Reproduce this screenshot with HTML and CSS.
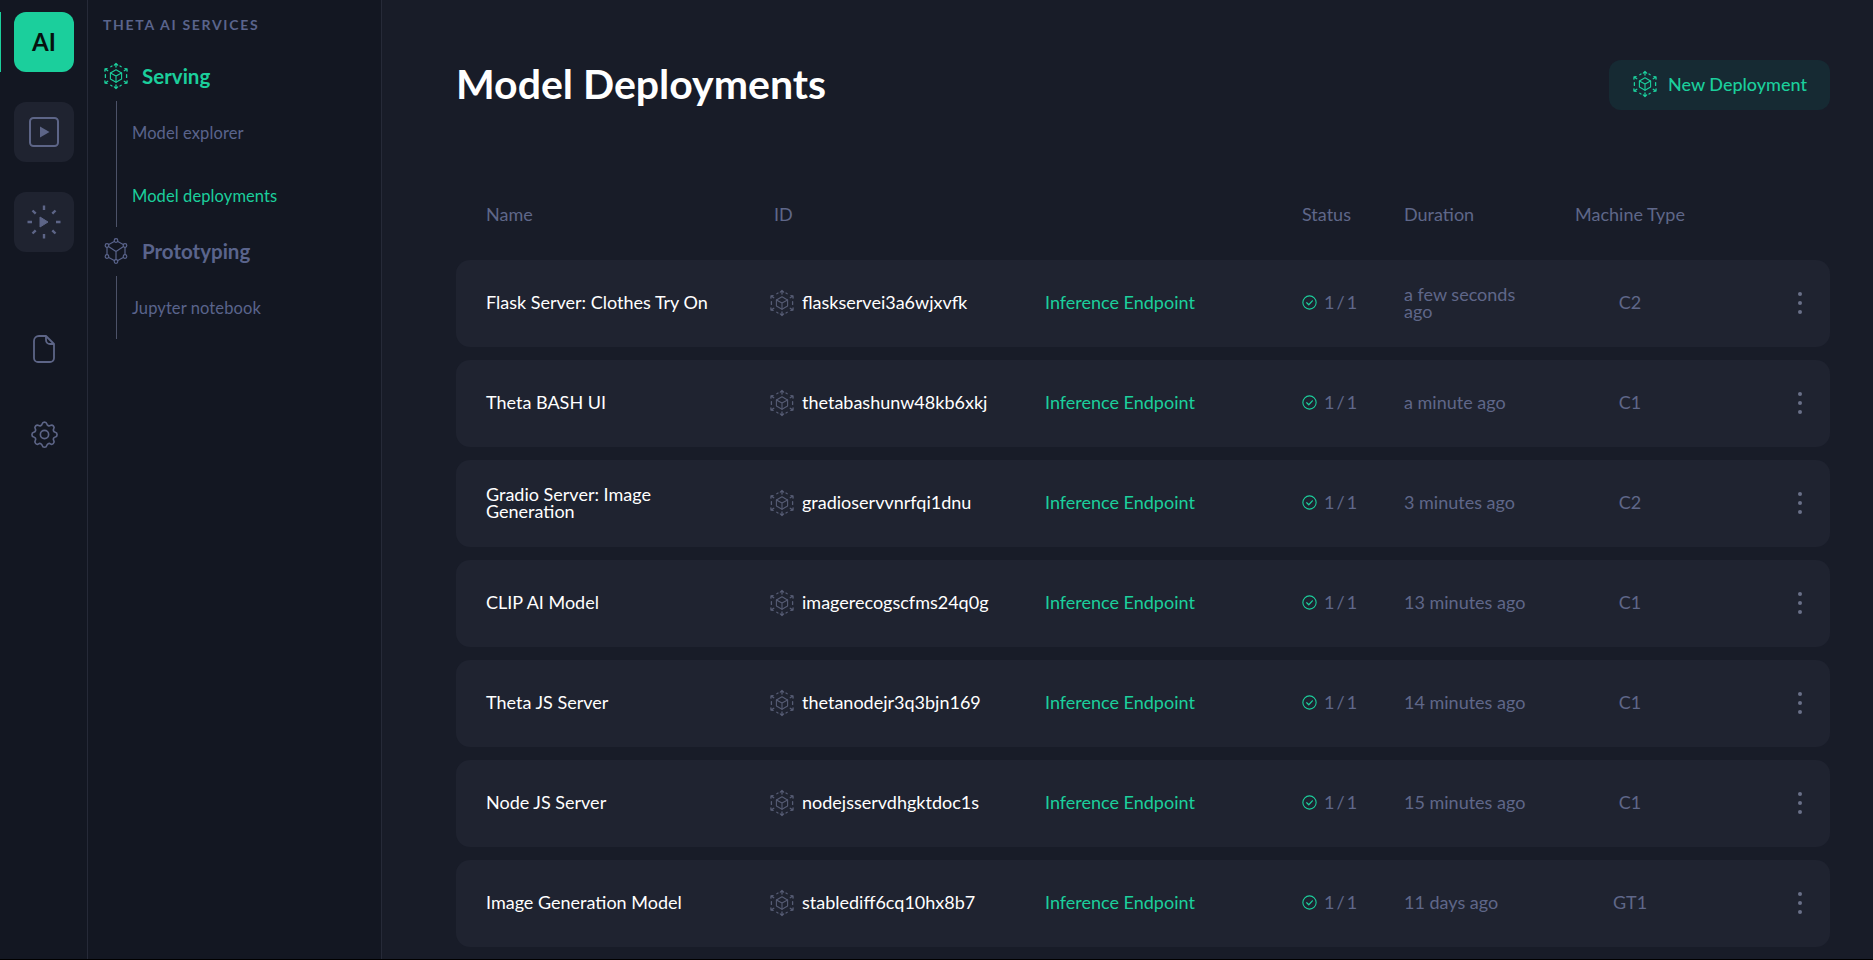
FILE: index.html
```html
<!DOCTYPE html>
<html lang="en">
<head>
<meta charset="utf-8">
<title>Model Deployments</title>
<link rel="stylesheet" href="styles.css">
</head>
<body>
<svg class="defs" width="0" height="0" aria-hidden="true">
  <symbol id="deploy" viewBox="0 0 26 28">
    <g fill="none" stroke="currentColor" stroke-width="1.100" stroke-linecap="round" stroke-linejoin="round">
      <path d="M13 7.800l5.600 3.100v6.200L13 20.200l-5.600-3.100v-6.200z"/>
      <path d="M7.400 10.900l5.600 3.100 5.600-3.100M13 14v6.200"/>
    </g>
    <g fill="none" stroke="currentColor" stroke-width="1.300" stroke-linecap="round" stroke-linejoin="round">
      <path d="M13 1.500v3.500M11.300 3.100L13 1.400l1.700 1.700"/>
      <path d="M13 26.500V23M11.300 24.900l1.700 1.700 1.700-1.700"/>
      <path d="M2 7l2.800 1.700M1.900 9.100L2 7l2.100-.3"/>
      <path d="M24 7l-2.800 1.700M24.100 9.100L24 7l-2.100-.3"/>
      <path d="M2 21l2.800-1.700M1.900 18.900L2 21l2.100.3"/>
      <path d="M24 21l-2.800-1.700M24.100 18.900L24 21l-2.100.3"/>
      <path d="M2.400 12.600v2.800M23.600 12.600v2.800M7.800 4.700l1.200-.7M18.200 4.700l-1.200-.7M7.800 23.300l1.200.7M18.200 23.300l-1.200.7"/>
    </g>
  </symbol>
  <symbol id="check" viewBox="0 0 14 14">
    <circle cx="7" cy="7" r="6.200" fill="none" stroke="currentColor" stroke-width="1"/>
    <path d="M4.400 7.200l1.900 1.900 3.400-3.700" fill="none" stroke="currentColor" stroke-width="1.100" stroke-linecap="round" stroke-linejoin="round"/>
  </symbol>
</svg>
<div class="app">
  <nav class="rail">
    <span class="rail-marker"></span>
    <a class="tile tile-active">AI</a>
    <a class="tile">
      <svg class="tile-icon" viewBox="0 0 32 32" fill="none"><rect x="2" y="2" width="28" height="28" rx="3.500" stroke="currentColor" stroke-width="2"/><path d="M12 10.500l9.500 5.500-9.500 5.500z" fill="currentColor"/></svg>
    </a>
    <a class="tile">
      <svg class="tile-icon tile-icon-wide" viewBox="0 0 36 36" fill="none"><g stroke="currentColor" stroke-width="2.400" stroke-linecap="butt"><path d="M18 1.500v4.500M18 30v4.500M1.500 18h4.500M30 18h4.500M6.500 6.500l3.200 3.200M26.300 26.300l3.200 3.200M29.500 6.500l-3.200 3.200M9.700 26.300l-3.200 3.200"/></g><path d="M14 13l8 5-8 5z" fill="currentColor" stroke="currentColor" stroke-width="1" stroke-linejoin="round"/></svg>
    </a>
    <a class="rail-link rail-link-file">
      <svg viewBox="0 0 22 28" width="22" height="28" fill="none" stroke="currentColor" stroke-width="1.800" stroke-linejoin="round"><path d="M6 1h7l8 8v14a4 4 0 0 1-4 4H5a4 4 0 0 1-4-4V6a5 5 0 0 1 5-5z"/><path d="M13 1v4a4 4 0 0 0 4 4h4"/></svg>
    </a>
    <a class="rail-link rail-link-gear">
      <svg viewBox="0 0 24 24" width="33" height="33" fill="none" stroke="currentColor" stroke-width="1.200" stroke-linejoin="round"><circle cx="12" cy="12" r="3"/><path d="M10.300 4.300c.4-1.800 3-1.800 3.400 0a1.700 1.700 0 0 0 2.600 1.100c1.500-.9 3.400.9 2.400 2.400a1.700 1.700 0 0 0 1.100 2.600c1.800.4 1.800 3 0 3.400a1.700 1.700 0 0 0-1.100 2.600c1 1.500-.9 3.400-2.400 2.400a1.700 1.700 0 0 0-2.600 1.100c-.4 1.800-3 1.800-3.400 0a1.700 1.700 0 0 0-2.600-1.100c-1.500 1-3.400-.9-2.400-2.400a1.700 1.700 0 0 0-1.100-2.600c-1.800-.4-1.800-3 0-3.400a1.700 1.700 0 0 0 1.100-2.600c-1-1.500.9-3.300 2.400-2.400a1.700 1.700 0 0 0 2.600-1.100z"/></svg>
    </a>
  </nav>

  <aside class="panel">
    <h2 class="panel-title">THETA AI SERVICES</h2>
    <div class="group group-active">
      <svg class="group-icon"><use href="#deploy"/></svg>
      <span>Serving</span>
    </div>
    <ul class="subnav">
      <li>Model explorer</li>
      <li class="current">Model deployments</li>
    </ul>
    <div class="group">
      <svg class="group-icon" viewBox="0 0 26 26" fill="none" stroke="currentColor" stroke-width="1.200" stroke-linejoin="round"><path d="M13 2.500l9 5v11l-9 5-9-5v-11z"/><path d="M4 7.500l9 6 9-6M13 13.500v10"/><g fill="#131722"><circle cx="13" cy="2.500" r="1.800"/><circle cx="22" cy="7.500" r="1.800"/><circle cx="22" cy="18.500" r="1.800"/><circle cx="13" cy="23.500" r="1.800"/><circle cx="4" cy="18.500" r="1.800"/><circle cx="4" cy="7.500" r="1.800"/></g></svg>
      <span>Prototyping</span>
    </div>
    <ul class="subnav">
      <li>Jupyter notebook</li>
    </ul>
  </aside>

  <main class="main">
    <header class="topbar">
      <h1>Model Deployments</h1>
      <button class="new-btn" type="button">
        <svg class="btn-icon"><use href="#deploy"/></svg>
        New Deployment
      </button>
    </header>

    <div class="row-grid table-head">
      <span>Name</span>
      <span class="head-id">ID</span>
      <span></span>
      <span>Status</span>
      <span>Duration</span>
      <span class="machine">Machine Type</span>
      <span></span>
    </div>

    <div class="rows">
      <article class="row-grid card">
        <div class="name">Flask Server: Clothes Try On</div>
        <div class="id"><svg class="id-icon"><use href="#deploy"/></svg>flaskservei3a6wjxvfk</div>
        <div class="type">Inference Endpoint</div>
        <div class="status"><svg class="check"><use href="#check"/></svg>1 / 1</div>
        <div class="duration">a few seconds ago</div>
        <div class="machine">C2</div>
        <div class="more"><i></i><i></i><i></i></div>
      </article>
      <article class="row-grid card">
        <div class="name">Theta BASH UI</div>
        <div class="id"><svg class="id-icon"><use href="#deploy"/></svg>thetabashunw48kb6xkj</div>
        <div class="type">Inference Endpoint</div>
        <div class="status"><svg class="check"><use href="#check"/></svg>1 / 1</div>
        <div class="duration">a minute ago</div>
        <div class="machine">C1</div>
        <div class="more"><i></i><i></i><i></i></div>
      </article>
      <article class="row-grid card">
        <div class="name">Gradio Server: Image Generation</div>
        <div class="id"><svg class="id-icon"><use href="#deploy"/></svg>gradioservvnrfqi1dnu</div>
        <div class="type">Inference Endpoint</div>
        <div class="status"><svg class="check"><use href="#check"/></svg>1 / 1</div>
        <div class="duration">3 minutes ago</div>
        <div class="machine">C2</div>
        <div class="more"><i></i><i></i><i></i></div>
      </article>
      <article class="row-grid card">
        <div class="name">CLIP AI Model</div>
        <div class="id"><svg class="id-icon"><use href="#deploy"/></svg>imagerecogscfms24q0g</div>
        <div class="type">Inference Endpoint</div>
        <div class="status"><svg class="check"><use href="#check"/></svg>1 / 1</div>
        <div class="duration">13 minutes ago</div>
        <div class="machine">C1</div>
        <div class="more"><i></i><i></i><i></i></div>
      </article>
      <article class="row-grid card">
        <div class="name">Theta JS Server</div>
        <div class="id"><svg class="id-icon"><use href="#deploy"/></svg>thetanodejr3q3bjn169</div>
        <div class="type">Inference Endpoint</div>
        <div class="status"><svg class="check"><use href="#check"/></svg>1 / 1</div>
        <div class="duration">14 minutes ago</div>
        <div class="machine">C1</div>
        <div class="more"><i></i><i></i><i></i></div>
      </article>
      <article class="row-grid card">
        <div class="name">Node JS Server</div>
        <div class="id"><svg class="id-icon"><use href="#deploy"/></svg>nodejsservdhgktdoc1s</div>
        <div class="type">Inference Endpoint</div>
        <div class="status"><svg class="check"><use href="#check"/></svg>1 / 1</div>
        <div class="duration">15 minutes ago</div>
        <div class="machine">C1</div>
        <div class="more"><i></i><i></i><i></i></div>
      </article>
      <article class="row-grid card">
        <div class="name">Image Generation Model</div>
        <div class="id"><svg class="id-icon"><use href="#deploy"/></svg>stablediff6cq10hx8b7</div>
        <div class="type">Inference Endpoint</div>
        <div class="status"><svg class="check"><use href="#check"/></svg>1 / 1</div>
        <div class="duration">11 days ago</div>
        <div class="machine">GT1</div>
        <div class="more"><i></i><i></i><i></i></div>
      </article>
    </div>
  </main>
</div>
</body>
</html>
```

FILE: styles.css
```css
* { box-sizing: border-box; }
html, body { margin: 0; height: 100%; background: #000; overflow: hidden; }
body { font-family: "Lato", "Noto Sans", sans-serif; color: #fff; }
.defs { position: absolute; }
ul { list-style: none; margin: 0; padding: 0; }

.app { display: flex; height: 959px; width: 1873px; overflow: hidden; }

/* icon rail */
.rail {
  position: relative;
  width: 88px;
  flex: none;
  background: #131722;
  border-right: 1px solid #262a38;
  display: flex;
  flex-direction: column;
  padding: 12px 0 0 14px;
}
.rail-marker { position: absolute; left: 0; top: 12px; width: 1px; height: 60px; background: #1bcf9c; }
.tile {
  width: 60px; height: 60px;
  border-radius: 12px;
  background: #1f2330;
  color: #5d6587;
  display: flex; align-items: center; justify-content: center;
  margin-bottom: 30px;
}
.tile-active { background: #1bcf9c; color: #06120f; font-size: 24px; font-weight: 700; padding-bottom: 2px; }
.tile-icon { width: 32px; height: 32px; }
.tile-icon-wide { width: 36px; height: 36px; }
.rail-link { width: 60px; display: flex; justify-content: center; color: #5d6587; }
.rail-link-file { margin-top: 53px; }
.rail-link-gear { margin-top: 55px; }

/* secondary panel */
.panel {
  width: 294px;
  flex: none;
  background: #131722;
  border-right: 1px solid #262a38;
  padding: 16px 0 0 15px;
  color: #5a648c;
}
.panel-title { margin: 0 0 28px; font-size: 14px; line-height: 18px; font-weight: 700; letter-spacing: 1.700px; }
.group { display: flex; align-items: center; gap: 13px; height: 28px; font-size: 20.500px; font-weight: 700; }
.group-active { color: #1bcf9c; }
.group-icon { width: 26px; height: 28px; flex: none; }
.subnav {
  margin: 11px 0 10px 13px;
  border-left: 1px solid #4c5268;
  padding-left: 15px;
  font-size: 16.500px;
  letter-spacing: .1px;
}
.subnav li { height: 63px; display: flex; align-items: center; }
.subnav .current { color: #1bcf9c; }

/* main column */
.main { flex: 1; min-width: 0; background: #181c28; padding: 0 43px 0 74px; }
.topbar { display: flex; justify-content: space-between; align-items: center; height: 50px; margin: 60px 0 93px; }
.topbar h1 { margin: 0; padding-bottom: 4px; font-size: 41px; font-weight: 700; }
.new-btn {
  width: 221px; height: 50px;
  border: 0; border-radius: 12px;
  background: #162a33; color: #1bcf9c;
  font: 500 18px "Lato", "Noto Sans", sans-serif;
  display: flex; align-items: center; justify-content: center; gap: 10px;
  padding: 0 0 2px;
}
.btn-icon { width: 26px; height: 28px; flex: none; }

.row-grid {
  display: grid;
  grid-template-columns: 283px 276px 257px 102px 130px 192px 1fr;
  align-items: center;
  padding-left: 30px;
}
.table-head { color: #5f6789; font-size: 18px; height: 22px; margin-bottom: 35px; }
.head-id { padding-left: 5px; }
.machine { text-align: center; color: #5f6789; }

.rows { display: flex; flex-direction: column; gap: 13px; }
.card { height: 87px; padding-bottom: 2px; background: #1f2330; border-radius: 14px; font-size: 18px; line-height: 17px; }
.name { max-width: 225px; color: #fff; }
.id { display: flex; align-items: center; gap: 7px; color: #fff; }
.id-icon { width: 26px; height: 28px; color: #565c74; flex: none; }
.type { color: #1bcf9c; }
.status { display: flex; align-items: center; gap: 7px; color: #5f6789; word-spacing: -2.500px; }
.check { width: 15px; height: 15px; color: #1bcf9c; flex: none; }
.duration { color: #5f6789; max-width: 125px; }
.more { display: flex; flex-direction: column; gap: 5px; align-items: flex-end; padding-right: 28px; }
.more i { width: 4px; height: 4px; border-radius: 50%; background: #6a7088; }
```
